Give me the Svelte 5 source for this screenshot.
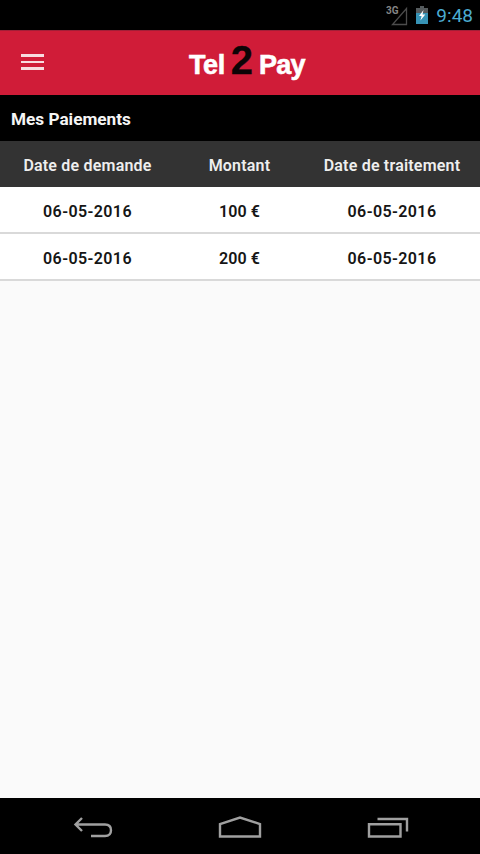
<script lang="ts">
  interface Payment {
    requested: string;
    amount: number;
    processed: string;
  }

  let payments = $state<Payment[]>([
    { requested: "06-05-2016", amount: 100, processed: "06-05-2016" },
    { requested: "06-05-2016", amount: 200, processed: "06-05-2016" },
  ]);
</script>

<div class="screen">
  <div class="status">
    <svg class="signal" width="23" height="22" viewBox="0 0 23 22">
      <text x="0" y="9">3G</text>
      <path d="M20.5 3.5V19.5H6.5Z" />
    </svg>
    <svg class="battery" width="12" height="18" viewBox="0 0 12 18">
      <path d="M4 0h4v2h4v5H0V2h4z" fill="#555b5e" />
      <path d="M0 7h12v11H0z" fill="#3793b5" />
      <path d="M7.5 4 3 10h2.6L4.4 14.5 9.3 8.4H6.5z" fill="#fff" />
    </svg>
    <span class="clock">9:48</span>
  </div>

  <header class="appbar">
    <button class="menu" aria-label="Menu">
      <span></span>
      <span></span>
      <span></span>
    </button>
    <div class="logo">
      <span class="word">Tel</span>
      <span class="two">2</span>
      <span class="word pay">Pay</span>
    </div>
  </header>

  <h1>Mes Paiements</h1>

  <div class="row head">
    <span>Date de demande</span>
    <span>Montant</span>
    <span>Date de traitement</span>
  </div>

  <main>
    {#each payments as p}
      <div class="row">
        <span>{p.requested}</span>
        <span class="amount">{p.amount} €</span>
        <span>{p.processed}</span>
      </div>
    {/each}
  </main>

  <nav>
    <button aria-label="Retour">
      <svg width="40" height="24" viewBox="0 0 40 24">
        <path d="M9 2 2.5 8.5 9 15M2.5 8.5H32Q38 8.5 38 14.2T32 20H18" />
      </svg>
    </button>
    <button aria-label="Accueil">
      <svg width="44" height="24" viewBox="0 0 44 24">
        <path d="M2 20.5V8L22 1.5 42 8V20.5Z" />
      </svg>
    </button>
    <button aria-label="Applications récentes">
      <svg width="42" height="24" viewBox="0 0 42 24">
        <path d="M2 8.2H33.5V20.5H2ZM10.5 3H40V15.5" />
      </svg>
    </button>
  </nav>
</div>

<style>
  :global(body) {
    margin: 0;
  }

  .screen {
    display: flex;
    flex-direction: column;
    height: 100vh;
    background: #fafafa;
    font-family: Roboto, "Liberation Sans", sans-serif;
    overflow: hidden;
  }

  button {
    padding: 0;
    border: none;
    background: none;
    cursor: pointer;
  }

  .status {
    flex: none;
    display: flex;
    align-items: center;
    justify-content: flex-end;
    box-sizing: border-box;
    height: 30px;
    padding-right: 7px;
    background: #000;
  }
  .signal {
    margin: 1px 7px 0 0;
  }
  .signal text {
    fill: #858585;
    font-size: 10px;
    font-weight: 700;
  }
  .signal path {
    fill: none;
    stroke: #4c4c4c;
    stroke-width: 1.3;
  }
  .battery {
    margin-right: 8px;
  }
  .clock {
    color: #4babd0;
    font-size: 19px;
    line-height: 30px;
    padding-top: 1px;
  }

  .appbar {
    flex: none;
    display: flex;
    align-items: center;
    box-sizing: border-box;
    height: 65px;
    padding: 0 0 2px 21px;
    border-top: 1px solid #a31e37;
    background: #d01c38;
  }
  .menu {
    display: flex;
    flex-direction: column;
    gap: 4px;
    width: 23px;
  }
  .menu span {
    height: 2.5px;
    background: #f8dce0;
  }
  .logo {
    display: flex;
    align-items: baseline;
    margin-left: 145px;
    padding-bottom: 4px;
    font-family: "Liberation Sans", Arial, sans-serif;
    font-weight: 700;
  }
  .word {
    color: #fff;
    font-size: 27px;
    letter-spacing: -0.4px;
    -webkit-text-stroke: 0.6px #fff;
  }
  .pay {
    letter-spacing: -0.8px;
  }
  .two {
    margin: 0 6px;
    color: #0c0406;
    font-size: 40px;
    line-height: 44px;
    -webkit-text-stroke: 0.3px #0c0406;
  }

  h1 {
    flex: none;
    height: 46px;
    margin: 0;
    padding-left: 11px;
    background: #000;
    color: #f5f5f5;
    font-size: 17.2px;
    font-weight: 700;
    line-height: 48px;
  }

  .row {
    display: grid;
    grid-template-columns: 175px 129px 176px;
    box-sizing: border-box;
    height: 47px;
    border-bottom: 2px solid #d9d9d9;
    background: #fff;
    color: #151515;
    font-size: 16px;
    font-weight: 600;
    line-height: 49px;
    text-align: center;
    letter-spacing: 0.4px;
  }
  .row .amount {
    letter-spacing: 0.1px;
  }
  .row.head {
    flex: none;
    height: 46px;
    border: none;
    background: #333;
    color: #eee;
    line-height: 49px;
    letter-spacing: 0.2px;
  }

  main {
    flex: 1;
  }

  nav {
    flex: none;
    display: flex;
    justify-content: center;
    gap: 105px;
    height: 56px;
    padding-left: 1px;
    background: #000;
  }
  nav button {
    display: flex;
    align-items: center;
    padding-top: 4px;
  }
  nav path {
    fill: none;
    stroke: #a0a0a0;
    stroke-width: 2.4;
  }
</style>
